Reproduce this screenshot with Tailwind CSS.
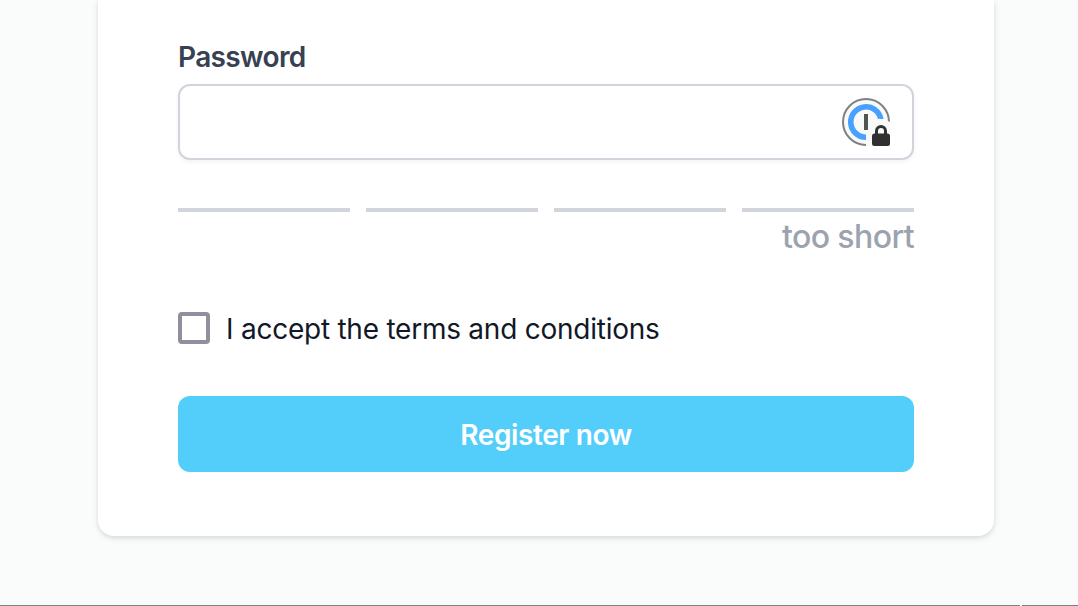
<!DOCTYPE html>
<html lang="en">
<head>
<meta charset="utf-8">
<title>Register</title>
<script src="https://cdn.jsdelivr.net/npm/@tailwindcss/browser@4"></script>
</head>
<body class="flex h-[606px] flex-col justify-between overflow-hidden bg-[#fafcfc] font-['Inter',sans-serif] text-[28px] text-[#111827]">
  <main class="ml-[98px] h-[536px] w-[896px] rounded-b-2xl bg-white px-20 pt-[37px] shadow-[0_2px_6px_rgba(0,0,0,0.1),0_2px_4px_rgba(0,0,0,0.05)]">
    <label class="block h-[47px] leading-[41px] font-[560] text-[#374151]"><span class="tracking-[-0.64px]">Password</span></label>
    <div class="flex h-[76px] items-center justify-end rounded-xl border-2 border-[#d1d5db] bg-white pr-[22px] shadow-[0_2px_4px_rgba(0,0,0,0.05)]">
      <svg class="size-12" viewBox="0 0 48 48" fill="none">
        <circle cx="24" cy="24" r="23" fill="#f8f9f9"/>
        <path d="M24 47A23 23 0 1 1 47 24" stroke="#808080" stroke-width="2"/>
        <path d="M24 39.2A15.2 15.2 0 1 1 38.9 21.2" stroke="#48a1ff" stroke-width="5.6"/>
        <path d="M24 48V37L30 23Q38 18 48 24V48Z" fill="#f9f9f9"/>
        <path d="M22 16h4v16h-4z" fill="#4f5553"/>
        <path d="M34.5 37v-4a4.5 4.5 0 0 1 9 0V37" stroke="#303030" stroke-width="3"/>
        <rect x="30" y="35.5" width="18" height="12.5" rx="2.5" fill="#303030"/>
      </svg>
    </div>
    <div class="mt-12 grid grid-cols-4 gap-4">
      <div class="h-1 bg-[#d1d5db]"></div><div class="h-1 bg-[#d1d5db]"></div><div class="h-1 bg-[#d1d5db]"></div><div class="h-1 bg-[#d1d5db]"></div>
    </div>
    <p class="mt-[5px] h-10 text-right text-[32px] leading-10 font-medium text-[#9ca3af]"><span class="tracking-[-0.6px]">too short</span></p>
    <label class="mt-[55px] flex h-8 items-center gap-4">
      <span class="size-8 rounded-[4px] border-4 border-[#8f8f9d] bg-white"></span>
      <span class="relative top-px leading-8 tracking-[-0.24px]">I accept the terms and conditions</span>
    </label>
    <button class="mt-[52px] flex h-[76px] w-full items-center justify-center rounded-xl bg-[#53cdfa] pt-0.5 font-semibold text-white"><span class="tracking-[-0.4px]">Register now</span></button>
  </main>
  <footer class="flex h-px gap-0.5"><div class="w-[1020px] bg-[#808080]"></div><div class="flex-1 bg-[#808080]"></div></footer>
</body>
</html>
